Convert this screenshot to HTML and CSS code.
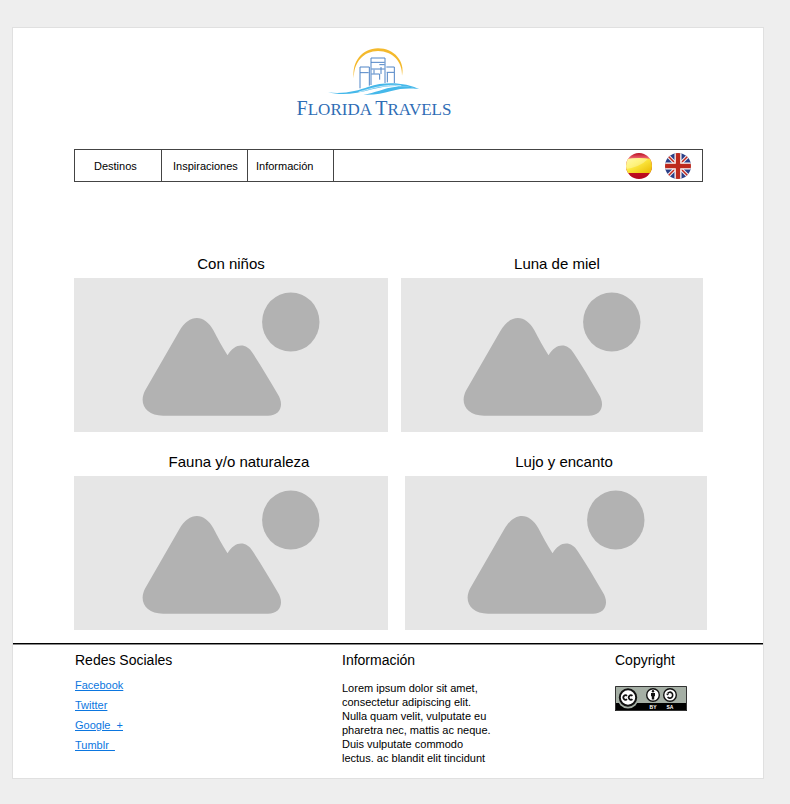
FILE: index.html
```html
<!DOCTYPE html>
<html lang="es">
<head>
<meta charset="utf-8">
<meta name="viewport" content="width=device-width, initial-scale=1">
<title>Florida Travels</title>
<link rel="stylesheet" href="styles.css">
</head>
<body>
<svg width="0" height="0" class="defs" aria-hidden="true">
  <symbol id="landscape" viewBox="0 0 177 154" preserveAspectRatio="xMidYMid meet">
    <ellipse cx="148.3" cy="44" rx="28.7" ry="29.6"/>
    <path d="M36.700 53.200C47 35.500 62 36 71 52.500C75 60 79 68 85 77.300C92.500 65 103.500 64.500 110.300 75.300C119 88.500 127 102 135.300 116.300C142 127 138 137.700 125.300 137.700H20.500C3 137.700-4.500 125 3 111.700Z"/>
  </symbol>
</svg>
<div class="page">
  <header class="header">
    <svg class="logo" viewBox="130 20 276 144" aria-hidden="true">
      <path d="M208 114C200 66 232 24 280 24C329 24 362 64 352 106C354 66 325 32 280 32C237 32 206 66 208 114Z" fill="#f4b92c"/>
      <g fill="none" stroke="#4f84c6" stroke-width="3">
        <path d="M226 144V80H254V136M226 97H252"/>
        <path d="M259 134V53H301V128M259 66H300M260 86H300M284 73H300M260 101H285M289 80V101M285 101V118M268 88V100"/>
        <path d="M305 80H329V128M306 96H328M308 97V126"/>
      </g>
      <path d="M130 156C180 162 218 151 252 139C300 122 365 126 405 147C360 134 312 133 262 147C214 161 170 166 130 156Z" fill="#45b8ea"/>
      <path d="M236 163C272 158 296 143 334 139C359 136 382 140 400 146C368 143 346 145 320 152C292 160 265 165 236 163Z" fill="#45b8ea"/>
      <path d="M222 155C262 144 300 131 350 136" fill="none" stroke="#fff" stroke-width="2"/>
    </svg>
    <h1 class="brand"><span class="initial">F</span>LORIDA <span class="initial">T</span>RAVELS</h1>
  </header>

  <nav class="nav">
    <a class="nav-link nav-link-wide" href="#">Destinos</a>
    <a class="nav-link nav-link-medium" href="#">Inspiraciones</a>
    <a class="nav-link" href="#">Información</a>
    <div class="languages">
      <button class="flag" type="button" aria-label="Español">
        <svg viewBox="0 0 26 26" aria-hidden="true">
          <defs>
            <clipPath id="disc"><circle cx="13" cy="13" r="13"/></clipPath>
            <linearGradient id="gold" x1="0" y1="0" x2="1" y2="1"><stop offset="0" stop-color="#fff58a"/><stop offset=".35" stop-color="#fff04a"/><stop offset="1" stop-color="#e9b800"/></linearGradient>
            <linearGradient id="red" x1="0" y1="0" x2="0" y2="1"><stop offset="0" stop-color="#b80f20"/><stop offset=".2" stop-color="#ee6470"/><stop offset=".3" stop-color="#d8152a"/><stop offset="1" stop-color="#b3081c"/></linearGradient>
          </defs>
          <g clip-path="url(#disc)">
            <path fill="url(#red)" d="M0 0H26V26H0Z"/>
            <path fill="url(#gold)" d="M0 6Q13 4 26 6V20H0Z"/>
            <path fill="#fff" opacity=".3" d="M0 13V6Q13 4 22 6Q14 14 0 16Z"/>
          </g>
        </svg>
      </button>
      <button class="flag" type="button" aria-label="English">
        <svg viewBox="0 0 26 26" aria-hidden="true">
          <g clip-path="url(#disc)">
            <path fill="#2b3f87" d="M0 0H26V26H0Z"/>
            <path stroke="#f4f0f4" stroke-width="3.600" d="M2 2L24 24M24 2L2 24"/>
            <path stroke="#c2281d" stroke-width="1.500" d="M2 2L24 24M24 2L2 24"/>
            <path stroke="#fff" stroke-width="7" d="M13 0V26M0 13H26"/>
            <path stroke="#bd2a1e" stroke-width="4.400" d="M13 0V26M0 13H26"/>
          </g>
        </svg>
      </button>
    </div>
  </nav>

  <main class="gallery">
    <div class="row">
      <section class="tile">
        <h2 class="tile-title">Con niños</h2>
        <svg class="picture" aria-hidden="true"><use href="#landscape"/></svg>
      </section>
      <section class="tile tile-narrow">
        <h2 class="tile-title">Luna de miel</h2>
        <svg class="picture" aria-hidden="true"><use href="#landscape"/></svg>
      </section>
    </div>
    <div class="row row-wide">
      <section class="tile">
        <h2 class="tile-title">Fauna y/o naturaleza</h2>
        <svg class="picture" aria-hidden="true"><use href="#landscape"/></svg>
      </section>
      <section class="tile tile-narrow">
        <h2 class="tile-title">Lujo y encanto</h2>
        <svg class="picture" aria-hidden="true"><use href="#landscape"/></svg>
      </section>
    </div>
  </main>

  <footer class="footer">
    <section>
      <h2 class="footer-title">Redes Sociales</h2>
      <ul class="social">
        <li><a href="#">Facebook</a></li>
        <li><a href="#">Twitter</a></li>
        <li><a href="#">Google&nbsp; +</a></li>
        <li><a href="#">Tumblr&nbsp;&nbsp;</a></li>
      </ul>
    </section>
    <section>
      <h2 class="footer-title">Información</h2>
      <p class="info">Lorem ipsum dolor sit amet,<br>consectetur adipiscing elit.<br>Nulla quam velit, vulputate eu<br>pharetra nec, mattis ac neque.<br>Duis vulputate commodo<br>lectus. ac blandit elit tincidunt</p>
    </section>
    <section>
      <h2 class="footer-title">Copyright</h2>
      <svg class="license" viewBox="0 0 72 25" role="img" aria-label="Creative Commons BY SA">
        <path fill="#a5afa5" d="M0 0H72V25H0Z"/>
        <path fill="#000" d="M0 17H72V25H0Z"/>
        <circle cx="13" cy="12" r="10.500" fill="#a5afa5"/>
        <circle cx="13" cy="11.500" r="8.200" fill="#fff" stroke="#111" stroke-width="2"/>
        <path fill="none" stroke="#111" stroke-width="1.700" d="M12 9.900A2.100 2.300 0 1 0 12 13.100M17.400 9.900A2.100 2.300 0 1 0 17.400 13.100"/>
        <g fill="#fff" stroke="#111" stroke-width="1.400">
          <circle cx="38" cy="9" r="6.300"/>
          <circle cx="55" cy="9" r="6.300"/>
        </g>
        <circle cx="38" cy="5.300" r="1.200" fill="#111"/>
        <path fill="#111" d="M36 6.900H40V10.200H39.200V13.500H36.800V10.200H36Z"/>
        <path fill="none" stroke="#111" stroke-width="1.600" d="M52.700 7.500A2.700 3 0 1 1 52.700 10.800"/>
        <path fill="#111" d="M51 7.700H54.200L52.500 9.600Z"/>
        <text class="license-text" x="38" y="23">BY</text>
        <text class="license-text" x="55" y="23">SA</text>
        <path fill="none" stroke="#333" d="M.5 .5H71.500V24.500H.5Z"/>
      </svg>
    </section>
  </footer>
</div>
</body>
</html>
```

FILE: styles.css
```css
* {
  box-sizing: border-box;
}

body {
  margin: 0;
  padding: 27px 26px 25px 12px;
  background: #eee;
  color: #000;
  font-family: "Liberation Sans", Arial, sans-serif;
  font-size: 11px;
}

h1,
h2,
p,
ul {
  margin: 0;
  padding: 0;
  font-weight: normal;
}

.defs {
  position: absolute;
}

.page {
  border: 1px solid #e0e0e0;
  background: #fff;
}

.header {
  display: flex;
  flex-direction: column;
  align-items: center;
  padding: 19px 28px 27px 0;
}

.logo {
  width: 92px;
  height: 48px;
}

.brand {
  color: #2f6db5;
  font-family: "Liberation Serif", "Times New Roman", serif;
  font-size: 17px;
  line-height: 24px;
  margin-top: 1px;
}

.initial {
  font-size: 20px;
}

.nav {
  display: flex;
  margin: 0 60px 0 61px;
  height: 33px;
  border: 1px solid #444;
}

.nav-link {
  width: 86px;
  padding-left: 8px;
  border-right: 1px solid #444;
  color: #000;
  line-height: 32px;
  text-decoration: none;
}

.nav-link-wide {
  width: 87px;
  padding-left: 19px;
}

.nav-link-medium {
  padding-left: 11px;
}

.languages {
  display: flex;
  flex: 1;
  align-items: center;
  justify-content: flex-end;
  gap: 13px;
  padding-right: 11px;
}

.flag {
  width: 26px;
  height: 26px;
  padding: 0;
  border: 0;
  background: none;
}

.flag svg {
  display: block;
}

.gallery {
  padding: 72px 60px 13px 61px;
}

.row {
  display: flex;
  gap: 13px;
}

.row-wide {
  gap: 17px;
  margin: 20px -4px 0 0;
}

.tile {
  flex: 314 1 0;
}

.tile-narrow {
  flex-grow: 302;
}

.tile-title {
  padding-bottom: 4px;
  font-size: 15px;
  line-height: 20px;
  text-align: center;
}

.tile-narrow .tile-title {
  padding-left: 10px;
}

.row-wide .tile-title {
  padding-left: 16px;
}

.picture {
  display: block;
  width: 100%;
  height: 154px;
  background: #e6e6e6;
  fill: #b2b2b2;
}

.footer {
  display: grid;
  grid-template-columns: 267fr 273fr 89fr;
  padding: 6px 59px 13px 62px;
  border-top: 1px solid #000;
  box-shadow: inset 0 1px #888;
}

.footer-title {
  font-size: 14px;
  line-height: 20px;
}

.social {
  padding-top: 5px;
  line-height: 20px;
  list-style: none;
}

.social a {
  color: #0b76e0;
}

.info {
  padding-top: 11px;
  line-height: 14px;
}

.license {
  display: block;
  width: 72px;
  height: 25px;
  margin-top: 16px;
}

.license-text {
  fill: #fff;
  font-size: 5px;
  font-weight: bold;
  text-anchor: middle;
}
```
